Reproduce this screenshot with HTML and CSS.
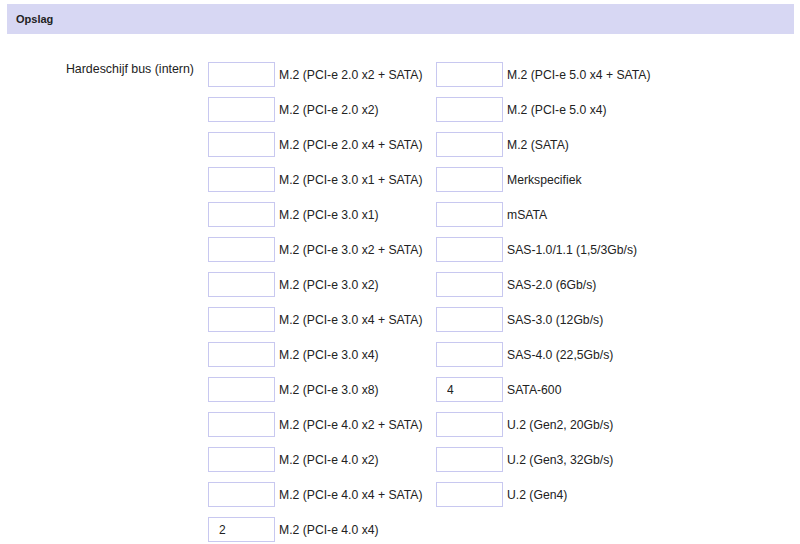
FILE: index.html
```html
<!DOCTYPE html>
<html>
<head>
<meta charset="utf-8">
<link rel="stylesheet" href="styles.css">
</head>
<body>
<div class="section">
  <div class="section-head">Opslag</div>
  <div class="field">
    <div class="field-label">Hardeschijf bus (intern)</div>
    <div class="options">
      <div class="col">
        <div class="opt"><input class="num" type="text" value=""><span class="opt-label">M.2 (PCI-e 2.0 x2 + SATA)</span></div>
        <div class="opt"><input class="num" type="text" value=""><span class="opt-label">M.2 (PCI-e 2.0 x2)</span></div>
        <div class="opt"><input class="num" type="text" value=""><span class="opt-label">M.2 (PCI-e 2.0 x4 + SATA)</span></div>
        <div class="opt"><input class="num" type="text" value=""><span class="opt-label">M.2 (PCI-e 3.0 x1 + SATA)</span></div>
        <div class="opt"><input class="num" type="text" value=""><span class="opt-label">M.2 (PCI-e 3.0 x1)</span></div>
        <div class="opt"><input class="num" type="text" value=""><span class="opt-label">M.2 (PCI-e 3.0 x2 + SATA)</span></div>
        <div class="opt"><input class="num" type="text" value=""><span class="opt-label">M.2 (PCI-e 3.0 x2)</span></div>
        <div class="opt"><input class="num" type="text" value=""><span class="opt-label">M.2 (PCI-e 3.0 x4 + SATA)</span></div>
        <div class="opt"><input class="num" type="text" value=""><span class="opt-label">M.2 (PCI-e 3.0 x4)</span></div>
        <div class="opt"><input class="num" type="text" value=""><span class="opt-label">M.2 (PCI-e 3.0 x8)</span></div>
        <div class="opt"><input class="num" type="text" value=""><span class="opt-label">M.2 (PCI-e 4.0 x2 + SATA)</span></div>
        <div class="opt"><input class="num" type="text" value=""><span class="opt-label">M.2 (PCI-e 4.0 x2)</span></div>
        <div class="opt"><input class="num" type="text" value=""><span class="opt-label">M.2 (PCI-e 4.0 x4 + SATA)</span></div>
        <div class="opt"><input class="num" type="text" value="2"><span class="opt-label">M.2 (PCI-e 4.0 x4)</span></div>
      </div>
      <div class="col">
        <div class="opt"><input class="num" type="text" value=""><span class="opt-label">M.2 (PCI-e 5.0 x4 + SATA)</span></div>
        <div class="opt"><input class="num" type="text" value=""><span class="opt-label">M.2 (PCI-e 5.0 x4)</span></div>
        <div class="opt"><input class="num" type="text" value=""><span class="opt-label">M.2 (SATA)</span></div>
        <div class="opt"><input class="num" type="text" value=""><span class="opt-label">Merkspecifiek</span></div>
        <div class="opt"><input class="num" type="text" value=""><span class="opt-label">mSATA</span></div>
        <div class="opt"><input class="num" type="text" value=""><span class="opt-label">SAS-1.0/1.1 (1,5/3Gb/s)</span></div>
        <div class="opt"><input class="num" type="text" value=""><span class="opt-label">SAS-2.0 (6Gb/s)</span></div>
        <div class="opt"><input class="num" type="text" value=""><span class="opt-label">SAS-3.0 (12Gb/s)</span></div>
        <div class="opt"><input class="num" type="text" value=""><span class="opt-label">SAS-4.0 (22,5Gb/s)</span></div>
        <div class="opt"><input class="num" type="text" value="4"><span class="opt-label">SATA-600</span></div>
        <div class="opt"><input class="num" type="text" value=""><span class="opt-label">U.2 (Gen2, 20Gb/s)</span></div>
        <div class="opt"><input class="num" type="text" value=""><span class="opt-label">U.2 (Gen3, 32Gb/s)</span></div>
        <div class="opt"><input class="num" type="text" value=""><span class="opt-label">U.2 (Gen4)</span></div>
      </div>
    </div>
  </div>
</div>
</body>
</html>
```
FILE: styles.css
```css
html, body {
  margin: 0;
  padding: 0;
  background: #ffffff;
}
body {
  font-family: "Liberation Sans", Arial, sans-serif;
  font-size: 12px;
  color: #222222;
}
.section {
  padding: 4px 6px 0 7px;
}
.section-head {
  height: 30px;
  line-height: 30px;
  background: #d7d7f3;
  padding-left: 9px;
  font-size: 11px;
  font-weight: bold;
  color: #222222;
}
.field {
  display: flex;
  margin-top: 28px;
}
.field-label {
  width: 187px;
  text-align: right;
  margin-right: 14px;
  line-height: 14px;
  font-size: 12.4px;
}
.options {
  display: flex;
}
.col {
  display: flex;
  flex-direction: column;
  gap: 10px;
  width: 228px;
}
.opt {
  display: flex;
  align-items: center;
  height: 25px;
}
.num {
  box-sizing: border-box;
  width: 67px;
  height: 25px;
  margin: 0 4px 0 0;
  padding: 0 0 0 10px;
  border: 1px solid #c8c8f0;
  border-radius: 0;
  outline: none;
  font-family: "Liberation Sans", Arial, sans-serif;
  font-size: 12px;
  color: #222222;
  background: #ffffff;
}
.opt-label {
  white-space: nowrap;
  font-size: 12.2px;
}
```
